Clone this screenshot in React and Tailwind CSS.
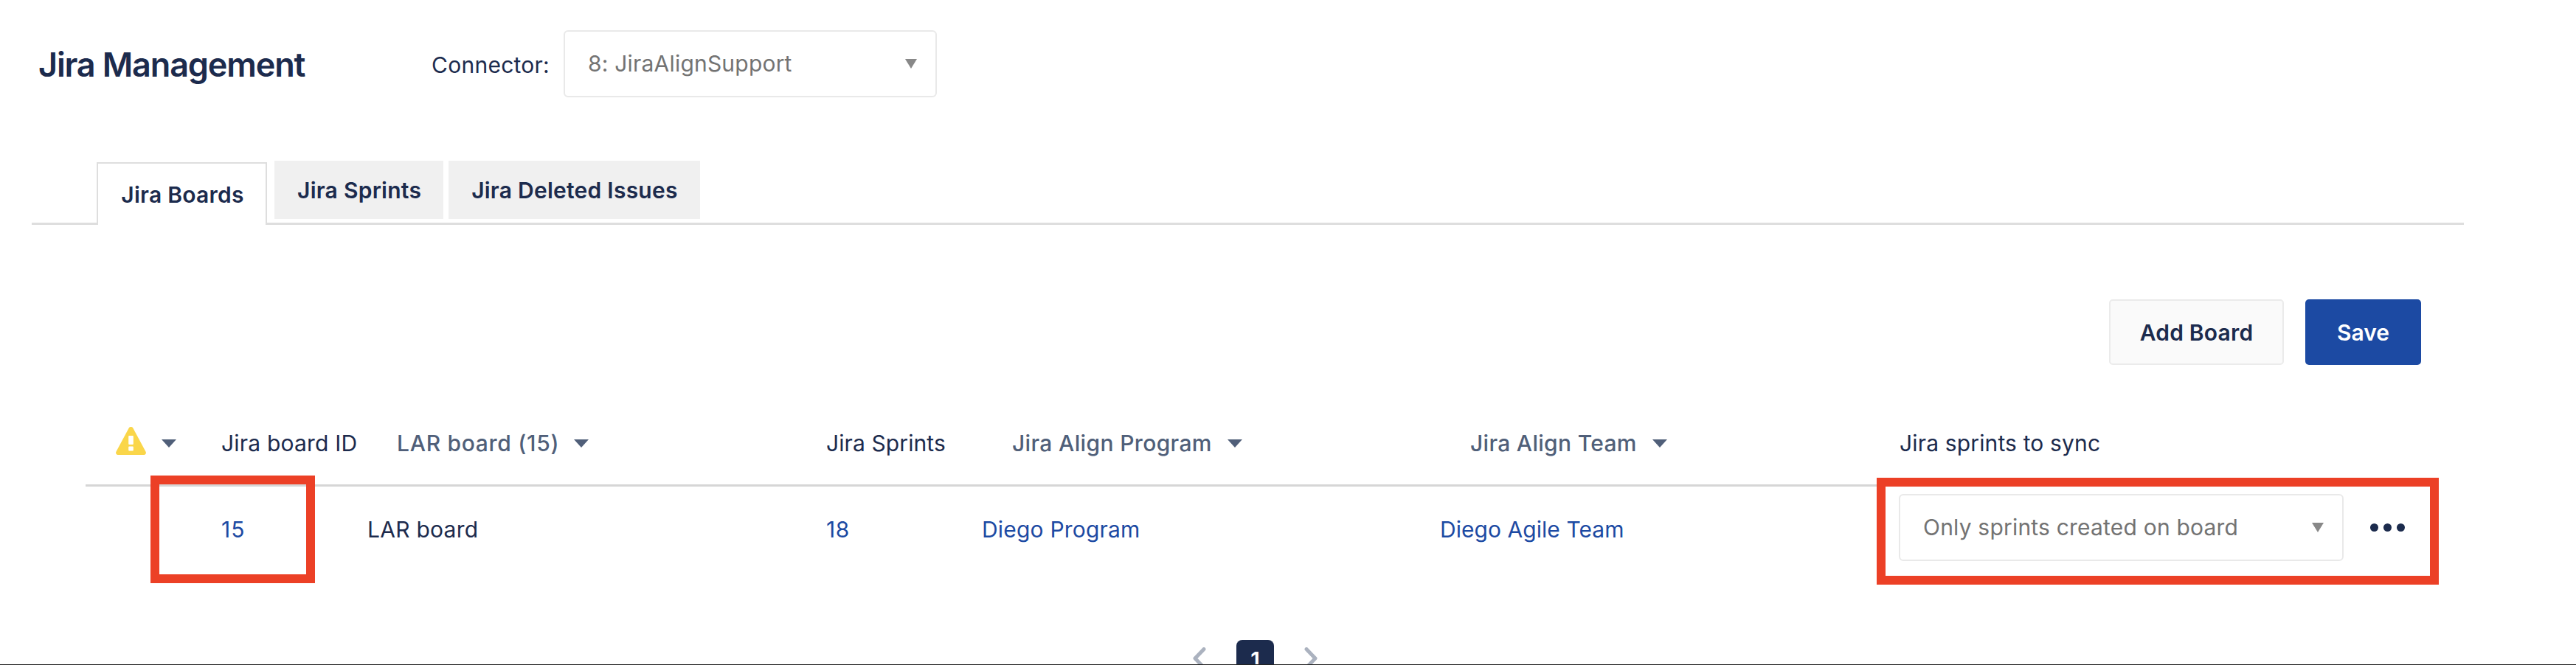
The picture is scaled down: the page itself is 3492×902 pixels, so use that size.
import React, { useState } from 'react';

const TABS = [
    { id: 'boards', label: 'Jira Boards' },
    { id: 'sprints', label: 'Jira Sprints' },
    { id: 'deleted', label: 'Jira Deleted Issues' },
];

// Small triangle used by the sortable column headers
const SortCaret = ({ className = '' }) => (
    <svg viewBox="0 0 20 11" className={`h-[11px] w-5 shrink-0 ${className}`}>
        <path d="M0 0h20L10 11z" fill="#505f79" />
    </svg>
);

const WarningIcon = () => (
    <svg viewBox="0 0 41 38" className="mb-[6px] h-[38px] w-[41px] shrink-0">
        <path
            d="M17.6 1.8a3.200 3.200 0 0 1 5.800 0l17.200 32a2.900 2.900 0 0 1-2.600 4.200H3a2.900 2.900 0 0 1-2.600-4.200z"
            fill="#fad64a"
        />
        <rect x="17.200" y="12" width="6.600" height="12" rx="1" fill="#fff" />
        <rect x="17.200" y="26.500" width="6.600" height="6" rx="1" fill="#fff" />
    </svg>
);

const SelectBox = ({ value, className = '' }) => (
    <button
        className={`flex h-[91px] shrink-0 items-center justify-between rounded-md border-2 border-[#e9e9e9] bg-white pr-[25px] pl-[31px] text-[#737373] ${className}`}
    >
        <span className="pb-0.5">{value}</span>
        <svg viewBox="0 0 16 13" className="h-[13px] w-4">
            <path d="M0 0h16L8 13z" fill="#888" />
        </svg>
    </button>
);

const Tab = ({ label, active, onClick }) => (
    <button
        onClick={onClick}
        className={`shrink-0 font-semibold tracking-[0.25px] ${
            active
                ? 'mt-0.5 mr-2.5 h-[85px] w-[231px] border-x-2 border-t-2 border-[#dedede] bg-white pl-0.5'
                : 'mr-[7px] h-[79px] bg-[#f0f0f0] pr-[30px] pl-[31px]'
        }`}
    >
        {label}
    </button>
);

const Pager = () => (
    <div className="mt-[97px] flex items-start pl-[1617px]">
        <svg viewBox="0 0 18 30" className="mt-[10px] h-[30px] w-[18px]" fill="none">
            <path d="M15 2.500L3 15l12 12.500" stroke="#abb2bf" strokeWidth="5" strokeLinecap="round" strokeLinejoin="round" />
        </svg>
        <span className="mx-[41px] flex h-[54px] w-[51px] shrink-0 items-center justify-center rounded-lg bg-[#1c2b4d] font-semibold text-white">
            1
        </span>
        <svg viewBox="0 0 18 30" className="mt-[10px] h-[30px] w-[18px]" fill="none">
            <path d="M3 2.500L15 15 3 27.500" stroke="#abb2bf" strokeWidth="5" strokeLinecap="round" strokeLinejoin="round" />
        </svg>
    </div>
);

const App = () => {
    const [activeTab, setActiveTab] = useState('boards');

    return (
        <div className="h-[902px] w-[3492px] overflow-hidden border-b border-[#222] bg-white pt-[41px] font-['Inter',sans-serif] text-[30px] leading-none text-[#1c2b4d]">
            {/* Page header */}
            <header className="flex h-[91px] items-center pl-[52px]">
                <h1 className="w-[533px] shrink-0 pt-0.5 text-[45px] leading-none font-semibold tracking-[-1.15px]">
                    Jira Management
                </h1>
                <span className="w-[179px] shrink-0 pt-0.5 tracking-[0.26px]">Connector:</span>
                <SelectBox value="8: JiraAlignSupport" className="w-[506px] tracking-[0.2px]" />
            </header>

            {/* Tabs */}
            <nav className="mt-[86px] ml-[43px] flex h-[87px] w-[3297px] items-start border-b-3 border-[#dedede] pl-[88px]">
                {TABS.map((tab) => (
                    <Tab
                        key={tab.id}
                        label={tab.label}
                        active={tab.id === activeTab}
                        onClick={() => setActiveTab(tab.id)}
                    />
                ))}
            </nav>

            {/* Actions */}
            <div className="mt-[101px] flex justify-end gap-[29px] pr-[210px]">
                <button className="h-[89px] w-[237px] rounded-[5px] border-2 border-[#ebebeb] bg-[#fafafa] font-semibold tracking-[0.2px]">
                    Add Board
                </button>
                <button className="h-[89px] w-[157px] rounded-[5px] bg-[#1c4aa3] font-semibold text-white">
                    Save
                </button>
            </div>

            {/* Boards table */}
            <section className="mt-[50px] ml-[116px] w-[3190px]">
                <div className="flex h-[115px] items-center border-b-3 border-[#d6d6d6]">
                    <div className="flex w-[184px] shrink-0 items-center gap-[21px] pl-[41px]">
                        <WarningIcon />
                        <SortCaret />
                    </div>
                    <div className="w-[238px] shrink-0 tracking-[0.2px]">Jira board ID</div>
                    <div className="flex w-[582px] shrink-0 items-center font-medium tracking-[0.7px] text-[#505f79]">
                        LAR board (15)
                        <SortCaret className="ml-[20px]" />
                    </div>
                    <div className="w-[252px] shrink-0 tracking-[0.1px]">Jira Sprints</div>
                    <div className="flex w-[621px] shrink-0 items-center font-medium tracking-[0.35px] text-[#505f79]">
                        Jira Align Program
                        <SortCaret className="ml-[21px]" />
                    </div>
                    <div className="flex w-[582px] shrink-0 items-center font-medium tracking-[0.3px] text-[#505f79]">
                        Jira Align Team
                        <SortCaret className="ml-[21px]" />
                    </div>
                    <div className="tracking-[0.15px]">Jira sprints to sync</div>
                </div>

                <div className="relative flex h-[111px] items-center pl-[184px]">
                    <a className="w-[198px] shrink-0 pt-1 tracking-[1px] text-[#1c4aa3]">15</a>
                    <span className="w-[622px] shrink-0 pt-1 tracking-[0.25px]">LAR board</span>
                    <a className="w-[211px] shrink-0 pt-1 tracking-[0.5px] text-[#1c4aa3]">18</a>
                    <a className="w-[621px] shrink-0 pt-1 tracking-[0.2px] text-[#1c4aa3]">Diego Program</a>
                    <a className="w-[622px] shrink-0 pt-1 tracking-[0.05px] text-[#1c4aa3]">Diego Agile Team</a>
                    <SelectBox value="Only sprints created on board" className="w-[603px] tracking-[0.2px]" />
                    <button className="ml-[36px] flex shrink-0 gap-[7px]">
                        <i className="size-[11px] rounded-full bg-[#1c2b4d]" />
                        <i className="size-[11px] rounded-full bg-[#1c2b4d]" />
                        <i className="size-[11px] rounded-full bg-[#1c2b4d]" />
                    </button>

                    {/* Callout frames */}
                    <div className="pointer-events-none absolute -top-[15px] left-[88px] h-[146px] w-[223px] border-[12.5px] border-[#ec4026]" />
                    <div className="pointer-events-none absolute -top-3 left-[2428px] h-[145px] w-[762px] border-[12.5px] border-[#ec4026]" />
                </div>
            </section>

            <Pager />
        </div>
    );
};

export default App;
